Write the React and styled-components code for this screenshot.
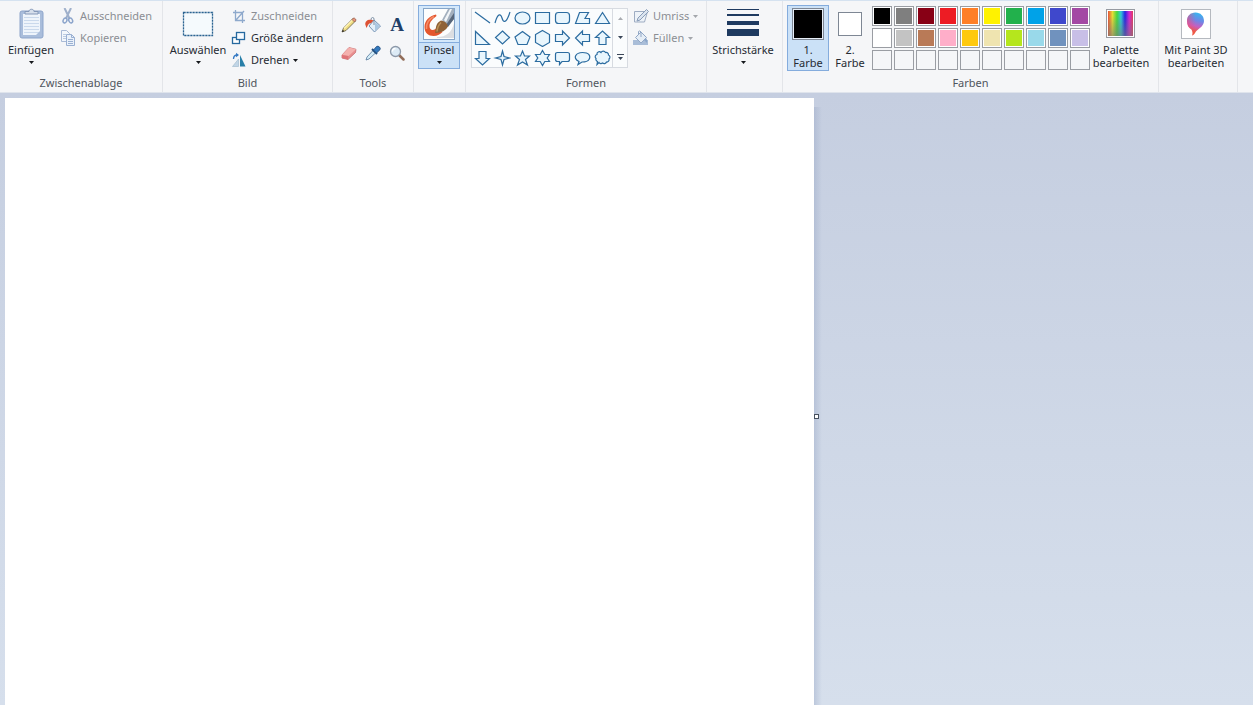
import React from "react";
import styled, { createGlobalStyle, css } from "styled-components";

const GlobalStyle = createGlobalStyle`
  *, *::before, *::after { box-sizing: border-box; }
  body {
    margin: 0;
    background: #d5deeb;
    color: #262b33;
    font: 11px/13px "Noto Sans", "Open Sans", sans-serif;
  }
  button {
    margin: 0;
    padding: 0;
    border: 0;
    background: none;
    color: inherit;
    font: inherit;
  }
  svg { display: block; flex: none; }
`;

const Page = styled.div`
  display: flex;
  flex-direction: column;
  min-height: 100vh;
`;

const Ribbon = styled.header`
  display: flex;
  background: #f5f6f8;
  border-top: 1px solid #d5e2f0;
  border-bottom: 1px solid #dfe4ec;
`;

const GroupBox = styled.section`
  display: flex;
  flex-direction: column;
  flex: none;
  min-width: ${(p) => p.$min || 0}px;
  padding: 4px 4px 2px;
  border-right: 1px solid #e3e5e9;
`;

const GroupBody = styled.div`
  display: flex;
  align-items: flex-start;
  height: 70px;
`;

const GroupLabel = styled.h2`
  margin: 0;
  min-height: 15px;
  color: #50555d;
  font-size: 11px;
  font-weight: 400;
  line-height: 15px;
  text-align: center;
`;

const BigButton = styled.button`
  display: flex;
  flex-direction: column;
  align-items: center;
  width: ${(p) => p.$width}px;
  padding: 3px 0 2px;
  white-space: nowrap;
  ${(p) =>
    p.$active &&
    css`
      background: #cbe1f7;
      box-shadow: inset 0 0 0 1px #84acdd;
    `}
`;

const BigIcon = styled.span`
  display: flex;
  align-items: center;
  justify-content: center;
  width: 32px;
  height: 32px;
  margin-bottom: 3px;
`;

const BigArrow = styled.span`
  display: flex;
  justify-content: center;
  padding: 5px 0 3px;
`;

const SplitButton = styled(BigButton)`
  background: linear-gradient(#d4e8fa 37px, #84acdd 37px, #84acdd 38px, #cbe1f7 38px);
`;

const Commands = styled.div`
  display: flex;
  flex-direction: column;
  align-items: flex-start;
`;

const SmallButton = styled.button`
  display: flex;
  align-items: center;
  gap: 4px;
  height: 22px;
  padding: 0 2px;
  white-space: nowrap;
  &:disabled { color: #8b8e94; }
`;

const SmallLabel = styled.span`
  padding-bottom: 2px;
`;

const ToolGrid = styled.div`
  display: grid;
  grid-template-columns: repeat(3, 24px);
  grid-auto-rows: 28px;
  padding-top: 6px;
`;

const ToolButton = styled.button`
  display: flex;
  align-items: center;
  justify-content: center;
`;

const Gallery = styled.div`
  display: flex;
  margin: 3px 3px 0 1px;
  border: 1px solid #d7dbe1;
  background: #fafcfd;
`;

const ShapeGrid = styled.div`
  display: grid;
  grid-template-columns: repeat(7, 20px);
  grid-auto-rows: 18px;
  row-gap: 2px;
`;

const Scroller = styled.div`
  display: grid;
  grid-template-rows: repeat(3, 1fr);
  width: 15px;
  border-left: 1px solid #d7dbe1;
`;

const Swatch = styled.span`
  width: ${(p) => p.$size}px;
  height: ${(p) => p.$size}px;
  border: 1px solid #7e8794;
  background: ${(p) => p.$color};
  ${(p) =>
    p.$framed &&
    css`
      box-shadow: inset 0 0 0 1px #e6eef8;
    `}
`;

const PaletteGrid = styled.div`
  display: grid;
  grid-template-columns: repeat(10, 20px);
  grid-auto-rows: 20px;
  gap: 2px;
  padding: 1px 1px 0;
`;

const PaletteCell = styled.button`
  border: 1px solid #9a9da3;
  background: ${(p) => p.$color || "#f5f6f8"};
  box-shadow: inset 0 0 0 1px ${(p) => (p.$color ? "#fff" : "#f5f6f8")};
`;

const Workspace = styled.main`
  display: flex;
  flex: 1;
  padding-top: 5px;
  background: linear-gradient(#c5cee0, #d6dfec);
`;

const PaperArea = styled.div`
  display: flex;
  width: 65%;
  padding-left: 5px;
`;

const Paper = styled.div`
  position: relative;
  flex: 1;
  background: #fff;
`;

const Handle = styled.span`
  position: absolute;
  top: 52%;
  left: 100%;
  width: 5px;
  height: 5px;
  border: 1px solid #47505e;
  background: #fff;
`;

const PaperShadow = styled.div`
  width: 8px;
  margin-top: 9px;
  background: linear-gradient(90deg, rgba(150, 165, 195, 0.4), rgba(150, 165, 195, 0));
`;

const Arrow = ({ color = "#15181c" }) => (
  <svg width="5" height="3" viewBox="0 0 5 3" aria-hidden="true">
    <path d="M0 0h5L2.500 3z" fill={color} />
  </svg>
);

const Icon = ({ size = 16, children }) => (
  <svg width={size} height={size} viewBox={`0 0 ${size} ${size}`} fill="none" aria-hidden="true">
    {children}
  </svg>
);

const ClipboardIcon = () => (
  <Icon size={32}>
    <rect x="5" y="3" width="23" height="27" rx="2" fill="#a9bddb" stroke="#8da5cb" />
    <path d="M8 6h17v21H8z" fill="#eef4fb" />
    <path d="M9 9.500h15M9 12.500h15M9 15.500h15M9 18.500h15M9 21.500h15M9 24.500h15" stroke="#cad9ec" />
    <path d="M21 27l4-4v4z" fill="#a9bddb" />
    <path d="M10 6V3.500h4c0-3 5-3 5 0h4V6z" fill="#d5deeb" stroke="#8498b8" />
  </Icon>
);

const ScissorsIcon = () => (
  <Icon>
    <path d="M4.500 0l5 10.500M11 0L6 10.500" stroke="#9fb0cb" strokeWidth="2" />
    <ellipse cx="5" cy="12.500" rx="1.800" ry="2.500" transform="rotate(25 5 12.500)" stroke="#8ba4cb" strokeWidth="1.500" />
    <ellipse cx="10.700" cy="12.500" rx="1.800" ry="2.500" transform="rotate(-25 10.700 12.500)" stroke="#8ba4cb" strokeWidth="1.500" />
  </Icon>
);

const CopyIcon = () => (
  <Icon>
    <path d="M1.500.5h5l3 3v8h-8z" fill="#f3f7fc" stroke="#a9bad6" />
    <path d="M3 4.500h3M3 6.500h3M3 8.500h3" stroke="#bccbe1" />
    <path d="M6.500 4.500h5l3 3v8h-8z" fill="#eaf1fa" stroke="#9ab0d2" />
    <path d="M11.500 4.500v3h3M8 9.500h5M8 11.500h5M8 13.500h5" stroke="#9ab0d2" />
  </Icon>
);

const SelectIcon = () => (
  <Icon size={32}>
    <rect x="1.500" y="4.500" width="29" height="23" fill="#f5fafd" stroke="#2b6391" strokeWidth="1.300" strokeDasharray="2.200 .8" />
  </Icon>
);

const CropIcon = () => (
  <Icon>
    <path d="M4.500 2v10.500H14M2 4.500h9.500V15M5 12L13 3" stroke="#8ea9cc" strokeWidth="1.300" />
  </Icon>
);

const ResizeIcon = () => (
  <Icon>
    <rect x="1.500" y="7.500" width="7" height="6" fill="#fff" stroke="#26699f" strokeWidth="1.300" />
    <rect x="5.500" y="2.500" width="8" height="7" fill="#f6fbff" stroke="#26699f" strokeWidth="1.300" />
  </Icon>
);

const RotateIcon = () => (
  <Icon>
    <path d="M9 3l5.500 11.500H9z" fill="#287fa8" />
    <path d="M7.500 7v7.500h-6z" fill="#c1d5e6" stroke="#a4bbd0" strokeWidth=".7" />
    <path d="M2.500 7c0-3 1-4 4-4" stroke="#367ac4" strokeWidth="1.300" />
    <path d="M5 .8L8 3 5 5.200z" fill="#367ac4" />
  </Icon>
);

const PencilIcon = () => (
  <Icon>
    <path d="M1 15l1.500-4L12 1.500 14.500 4 5 13.500z" fill="#eedc82" stroke="#655b42" strokeWidth=".8" />
    <path d="M3 11.500L11.500 3" stroke="#fff5b5" strokeWidth="1.200" />
    <path d="M11 2.500l1.200-1.300q1-.7 2.300.8.800 1 .2 1.700L13.500 5z" fill="#e9967e" stroke="#8b5745" strokeWidth=".7" />
    <path d="M1 15l.8-2.200 1.500 1.400z" fill="#222" />
  </Icon>
);

const BucketIcon = () => (
  <Icon>
    <path d="M9 3l6.500 6-6 6L4 9z" fill="#e3eef8" stroke="#6888ad" strokeWidth=".9" />
    <path d="M10 5l4.500 4-4.500 5z" fill="#a9c7e2" />
    <path d="M9 8V2q0-1.500-1.500-1.500T6 3" stroke="#72869d" strokeWidth=".9" />
    <path d="M8.500 3.200C3 1.500 0 4 .3 7.500L1.500 11l1.500-3c.8-1.500 2-1.800 3-1.800z" fill="#dd5134" />
  </Icon>
);

const LetterA = styled.span`
  color: #1f3f68;
  font: bold 19px/20px "Liberation Serif", serif;
`;

const EraserIcon = () => (
  <Icon>
    <path d="M1 10L8 2.500l7 1.800-.5 3.200-7.500 7-6-1.500z" fill="#e98f90" stroke="#c66d70" strokeWidth=".8" />
    <path d="M1 10L8 2.500l7 1.800L7.500 11z" fill="#f4b1ae" />
    <path d="M1 10l6.500 1L7 14.500 1 13z" fill="#df7377" />
  </Icon>
);

const DropperIcon = () => (
  <Icon>
    <path d="M1 15l1-3 6-6.500L10.500 8 4 14z" fill="#d5edf8" stroke="#56799c" strokeWidth=".8" />
    <path d="M7 4l5 5" stroke="#244e7d" strokeWidth="2" />
    <path d="M8.500 5l3-3.500q1.500-1 3 .5t.3 3L11.500 8z" fill="#3479bd" stroke="#224e82" strokeWidth=".8" />
  </Icon>
);

const LensIcon = () => (
  <Icon>
    <path d="M10 10l4.500 4.500" stroke="#916d5a" strokeWidth="2.500" strokeLinecap="round" />
    <circle cx="6.500" cy="6.500" r="5" fill="#dceaf5" stroke="#8c98a8" strokeWidth="1.300" />
    <path d="M3.500 6.500q0-3 3-3" stroke="#fff" strokeWidth="1.300" />
  </Icon>
);

const BrushIcon = () => (
  <Icon size={32}>
    <rect x=".5" y=".5" width="31" height="31" fill="#fcfdfd" stroke="#87a6c8" />
    <path d="M14 29q14 0 17-14v15H14z" fill="#d3d6d9" opacity=".8" />
    <path d="M13 6.500C6 8 1.500 13 1.500 19c0 6 4 9 9 9 4 0 7-2 9-4l-5-5c-3 4-8 4-8-1 0-4 3-7 7-10z" fill="#e4572e" />
    <path d="M11 8.500C6 11 3 15 3.500 21" stroke="#f58b67" strokeWidth="1.500" />
    <path d="M19 12L25 1h6v10l-7 7z" fill="#a3b0be" />
    <path d="M21 12L27 1h2l-6 13z" fill="#f1f5f8" />
    <path d="M23 17l8-12v6l-6 8z" fill="#58677a" />
    <path d="M18 12.500q6 1 7 6-3 6-13 6.500c1-3 0-10 6-12.500z" fill="#8f6237" />
    <path d="M18 14.500q-3.500 3.500-4 9" stroke="#bd9258" strokeWidth="1.500" />
  </Icon>
);

const OutlineIcon = () => (
  <Icon>
    <path d="M1.500 3.500h13l-3 10.500h-10z" fill="#edf2f8" stroke="#9eacc2" />
    <path d="M4 13l1-3 8.500-8.500 2 2L7 12z" fill="#dbe4ef" stroke="#899db9" />
  </Icon>
);

const FillIcon = () => (
  <Icon>
    <path d="M0 10h15v5H0z" fill="#a9bdd8" />
    <path d="M8 2l5.500 5.500L8 13 2.500 7.500z" fill="#e5edf6" stroke="#91a7c6" />
    <path d="M8 7V2q-1-2-2.500-.5v3" stroke="#91a7c6" />
    <path d="M13 8q2 2 1 5l-3-3z" fill="#8ca6c9" />
  </Icon>
);

const StrokeIcon = () => (
  <Icon size={32}>
    <path d="M0 1h32v1H0zM0 6h32v2H0zM0 13h32v4H0zM0 21h32v7H0z" fill="#1e3a60" />
  </Icon>
);

const SpectrumIcon = () => (
  <Icon size={30}>
    <defs>
      <linearGradient id="hue">
        <stop offset="0" stopColor="#e8503a" />
        <stop offset=".18" stopColor="#e5dc35" />
        <stop offset=".36" stopColor="#45d640" />
        <stop offset=".52" stopColor="#30c8d8" />
        <stop offset=".68" stopColor="#2525e2" />
        <stop offset=".85" stopColor="#d128d2" />
        <stop offset="1" stopColor="#e33d5d" />
      </linearGradient>
      <linearGradient id="fade" x2="0" y2="1">
        <stop offset=".2" stopColor="#777" stopOpacity="0" />
        <stop offset="1" stopColor="#777" stopOpacity=".6" />
      </linearGradient>
    </defs>
    <rect x=".5" y=".5" width="28" height="28" fill="#fff" stroke="#969aa1" />
    <path d="M2 2h25v25H2z" fill="url(#hue)" />
    <path d="M2 2h25v25H2z" fill="url(#fade)" />
  </Icon>
);

const DROP = "M14.500 3.500c5 0 8.500 3.500 8.500 8.500 0 6-7 8-9 12-.8 1.500-2 2.500-3 2.500 1-2 .5-4-.5-6C7.500 19 6 16 6 12c0-5 3.500-8.500 8.500-8.500z";

const Paint3DIcon = () => (
  <Icon size={30}>
    <defs>
      <linearGradient id="drop" x1=".65" y1="0" x2=".45" y2="1">
        <stop offset="0" stopColor="#35b7ef" />
        <stop offset=".35" stopColor="#6f86e6" />
        <stop offset=".6" stopColor="#c65fc0" />
        <stop offset=".85" stopColor="#ef5a3c" />
      </linearGradient>
      <linearGradient id="side">
        <stop offset="0" stopColor="#f04c75" stopOpacity=".6" />
        <stop offset=".5" stopColor="#f04c75" stopOpacity="0" />
      </linearGradient>
    </defs>
    <rect x=".5" y=".5" width="29" height="29" fill="#fff" stroke="#b5b9bf" />
    <path d={DROP} fill="url(#drop)" />
    <path d={DROP} fill="url(#side)" />
  </Icon>
);

const SHAPES = [
  ["Linie", "M2 3l15 11"],
  ["Kurve", "M2 14C5 3 8 5 9 9s4 7 8-6"],
  ["Ellipse", "M2 9a7.500 6 0 1 0 15 0a7.500 6 0 1 0-15 0z"],
  ["Rechteck", "M2.500 3.500h14v11h-14z"],
  ["Abgerundetes Rechteck", "M5.500 3.500h8q3 0 3 3v5q0 3-3 3h-8q-3 0-3-3v-5q0-3 3-3z"],
  ["Vieleck", "M6.500 3.500h9L12 9.500h4.500v5h-14z"],
  ["Dreieck", "M9.500 3.500l7 11h-14z"],
  ["Rechtwinkliges Dreieck", "M2.500 2.500v13h14z"],
  ["Raute", "M9.500 2l7 6.500-7 6.500-7-6.500z"],
  ["Fünfeck", "M9.500 2.500l7.500 5.500-3 7.500H5L2 8z"],
  ["Sechseck", "M9.500 1.500l7 4v8l-7 4-7-4v-8z"],
  ["Pfeil nach rechts", "M2.500 5.500h7v-3.500l7 7-7 7v-3.500h-7z"],
  ["Pfeil nach links", "M16.500 5.500h-7v-3.500l-7 7 7 7v-3.500h7z"],
  ["Pfeil nach oben", "M6 15.500v-7H2.500l7-6.500 7 6.500H13v7z"],
  ["Pfeil nach unten", "M6 2.500v7H2.500l7 6.500 7-6.500H13v-7z"],
  ["Vierzackiger Stern", "M9.500 2l1.500 5.500 5.500 1.500-5.500 1.500-1.500 5.500-1.500-5.500L2.500 9l5.500-1.500z"],
  ["Fünfzackiger Stern", "M9.500 2l2 5h5l-4 3.500 2 5.500-5-3-5 3 2-5.500-4-3.500h5z"],
  ["Sechszackiger Stern", "M9.500 1.500l2.300 4h4.700l-2.300 3.500 2.300 3.500h-4.700l-2.300 4-2.300-4H2.500L4.800 9 2.500 5.500h4.700z"],
  ["Abgerundete Legende", "M4.500 3.500h10q2 0 2 2v5q0 2-2 2H9l-2.500 3v-3h-2q-2 0-2-2v-5q0-2 2-2z"],
  ["Ovale Legende", "M6 12.500C-1 9 3 3.500 9.500 3.500S18 7 16 10.500c-1 1.800-4 2.500-7 2.500l-4 2.500z"],
  ["Wolkenlegende", "M4 5.500A2.300 2.300 0 0 1 8 3.500A2.500 2.500 0 0 1 12.500 3.500A2.300 2.300 0 0 1 15.500 6A2.300 2.300 0 0 1 16 10A2.300 2.300 0 0 1 13.500 13A2.500 2.500 0 0 1 9.500 14A2.300 2.300 0 0 1 6 13.500L4 15.500L4.500 12.500A2.300 2.300 0 0 1 3 9.500A2.300 2.300 0 0 1 4 5.500z"],
];

const PALETTE = [
  ["Schwarz", "#000"], ["Grau 50 %", "#7f7f7f"], ["Dunkelrot", "#880015"], ["Rot", "#ed1c24"], ["Orange", "#ff7f27"],
  ["Gelb", "#fff200"], ["Grün", "#22b14c"], ["Türkis", "#00a2e8"], ["Indigo", "#3f48cc"], ["Lila", "#a349a4"],
  ["Weiß", "#fff"], ["Grau 25 %", "#c3c3c3"], ["Braun", "#b97a57"], ["Rosé", "#ffaec9"], ["Gold", "#ffc90e"],
  ["Hellgelb", "#efe4b0"], ["Gelbgrün", "#b5e61d"], ["Helles Türkis", "#99d9ea"], ["Blaugrau", "#7092be"], ["Lavendel", "#c8bfe7"],
];
const EMPTY_CELLS = Array.from({ length: 10 }, (_, i) => `Eigene Farbe ${i + 1}`);

const TOOLS = [
  ["Stift", <PencilIcon />],
  ["Füllung", <BucketIcon />],
  ["Text", <LetterA>A</LetterA>],
  ["Radierer", <EraserIcon />],
  ["Farbauswahl", <DropperIcon />],
  ["Bildschirmlupe", <LensIcon />],
];

const Group = ({ label, min, children }) => (
  <GroupBox $min={min}>
    <GroupBody>{children}</GroupBody>
    <GroupLabel as={label ? "h2" : "div"}>{label}</GroupLabel>
  </GroupBox>
);

const Big = ({ icon, lines, width, arrow, active, as: Component = BigButton }) => (
  <Component type="button" $width={width} $active={active}>
    <BigIcon>{icon}</BigIcon>
    {lines.map((line) => (
      <span key={line}>{line}</span>
    ))}
    {arrow && (
      <BigArrow>
        <Arrow />
      </BigArrow>
    )}
  </Component>
);

const Small = ({ icon, label, arrow, disabled }) => (
  <SmallButton type="button" disabled={disabled}>
    {icon}
    <SmallLabel>{label}</SmallLabel>
    {arrow && <Arrow color={disabled ? "#a3a6ab" : undefined} />}
  </SmallButton>
);

export default function App() {
  return (
    <Page>
      <GlobalStyle />
      <Ribbon>
        <Group label="Zwischenablage" min={163}>
          <Big icon={<ClipboardIcon />} lines={["Einfügen"]} width={54} arrow />
          <Commands>
            <Small icon={<ScissorsIcon />} label="Ausschneiden" disabled />
            <Small icon={<CopyIcon />} label="Kopieren" disabled />
          </Commands>
        </Group>
        <Group label="Bild" min={170}>
          <Big icon={<SelectIcon />} lines={["Auswählen"]} width={62} arrow />
          <Commands>
            <Small icon={<CropIcon />} label="Zuschneiden" disabled />
            <Small icon={<ResizeIcon />} label="Größe ändern" />
            <Small icon={<RotateIcon />} label="Drehen" arrow />
          </Commands>
        </Group>
        <Group label="Tools">
          <ToolGrid>
            {TOOLS.map(([name, icon]) => (
              <ToolButton key={name} type="button" aria-label={name}>
                {icon}
              </ToolButton>
            ))}
          </ToolGrid>
        </Group>
        <Group min={52}>
          <Big as={SplitButton} icon={<BrushIcon />} lines={["Pinsel"]} width={42} arrow active />
        </Group>
        <Group label="Formen" min={241}>
          <Gallery>
            <ShapeGrid>
              {SHAPES.map(([name, path]) => (
                <ToolButton key={name} type="button" aria-label={name}>
                  <svg width="18" height="18" viewBox="0 0 18 18" aria-hidden="true">
                    <path d={path} fill={name === "Linie" || name === "Kurve" ? "none" : "#e9f6fd"} stroke="#2b6ca0" strokeWidth="1.200" />
                  </svg>
                </ToolButton>
              ))}
            </ShapeGrid>
            <Scroller>
              <ToolButton type="button" aria-label="Nach oben" disabled>
                <svg width="5" height="3" viewBox="0 0 5 3" aria-hidden="true">
                  <path d="M0 3h5L2.500 0z" fill="#a9acb1" />
                </svg>
              </ToolButton>
              <ToolButton type="button" aria-label="Nach unten">
                <Arrow color="#3a4658" />
              </ToolButton>
              <ToolButton type="button" aria-label="Alle Formen">
                <svg width="7" height="6" viewBox="0 0 7 6" aria-hidden="true">
                  <path d="M0 0h7v1H0zM1 3h5L3.500 6z" fill="#3a4658" />
                </svg>
              </ToolButton>
            </Scroller>
          </Gallery>
          <Commands>
            <Small icon={<OutlineIcon />} label="Umriss" arrow disabled />
            <Small icon={<FillIcon />} label="Füllen" arrow disabled />
          </Commands>
        </Group>
        <Group min={76}>
          <Big icon={<StrokeIcon />} lines={["Strichstärke"]} width={64} arrow />
        </Group>
        <Group label="Farben" min={376}>
          <Big icon={<Swatch $size={32} $color="#000" $framed />} lines={["1.", "Farbe"]} width={42} active />
          <Big icon={<Swatch $size={24} $color="#fff" />} lines={["2.", "Farbe"]} width={42} />
          <PaletteGrid>
            {PALETTE.map(([name, color]) => (
              <PaletteCell key={name} type="button" aria-label={name} $color={color} />
            ))}
            {EMPTY_CELLS.map((name) => (
              <PaletteCell key={name} type="button" aria-label={name} disabled />
            ))}
          </PaletteGrid>
          <Big icon={<SpectrumIcon />} lines={["Palette", "bearbeiten"]} width={60} />
        </Group>
        <Group min={79}>
          <Big icon={<Paint3DIcon />} lines={["Mit Paint 3D", "bearbeiten"]} width={66} />
        </Group>
      </Ribbon>
      <Workspace>
        <PaperArea>
          <Paper>
            <Handle />
          </Paper>
        </PaperArea>
        <PaperShadow />
      </Workspace>
    </Page>
  );
}
